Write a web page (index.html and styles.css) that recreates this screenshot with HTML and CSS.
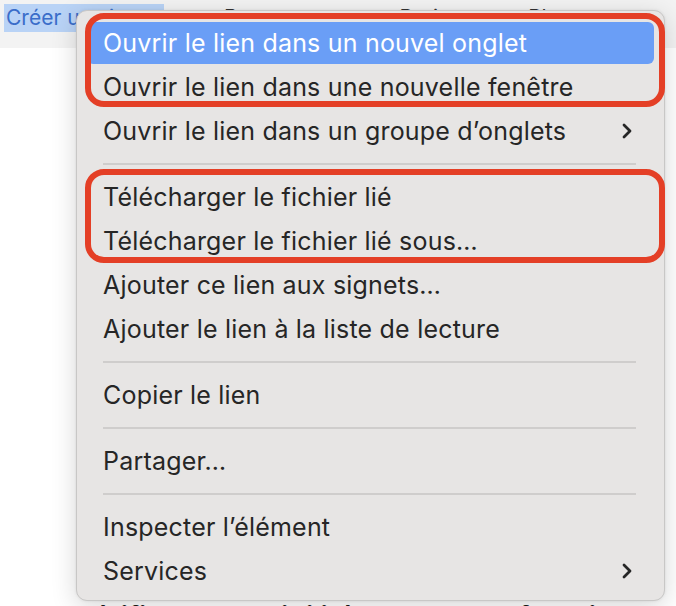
FILE: index.html
```html
<!DOCTYPE html>
<html lang="fr">
<head>
<meta charset="utf-8">
<link rel="stylesheet" href="styles.css">
</head>
<body>
<header class="topbar">
  <nav class="nav">
    <span class="nav-sel">Créer un site</span>
    <span class="nav-item">Ressources</span>
    <span class="nav-item">Projets</span>
    <span class="nav-item">Plus</span>
  </nav>
</header>
<main class="page">
  <p class="page-text">Vérifiez la possibilité d'erreur en fonction</p>
</main>

<div class="menu">
  <div class="row hl"><span>Ouvrir le lien dans un nouvel onglet</span></div>
  <div class="row"><span>Ouvrir le lien dans une nouvelle fenêtre</span></div>
  <div class="row"><span>Ouvrir le lien dans un groupe d’onglets</span>
    <svg class="chev" width="12" height="18" viewBox="0 0 12 18"><path d="M3 3 L9 9 L3 15" fill="none" stroke="#262626" stroke-width="2.8" stroke-linecap="round" stroke-linejoin="round"/></svg>
  </div>
  <div class="sep"></div>
  <div class="row"><span>Télécharger le fichier lié</span></div>
  <div class="row"><span>Télécharger le fichier lié sous…</span></div>
  <div class="row"><span>Ajouter ce lien aux signets…</span></div>
  <div class="row"><span>Ajouter le lien à la liste de lecture</span></div>
  <div class="sep"></div>
  <div class="row"><span>Copier le lien</span></div>
  <div class="sep"></div>
  <div class="row"><span>Partager…</span></div>
  <div class="sep"></div>
  <div class="row"><span>Inspecter l’élément</span></div>
  <div class="row"><span>Services</span>
    <svg class="chev" width="12" height="18" viewBox="0 0 12 18"><path d="M3 3 L9 9 L3 15" fill="none" stroke="#262626" stroke-width="2.8" stroke-linecap="round" stroke-linejoin="round"/></svg>
  </div>
</div>

<div class="mark mark-1"></div>
<div class="mark mark-2"></div>
</body>
</html>
```

FILE: styles.css
```css
* { box-sizing: border-box; }
html, body { margin: 0; padding: 0; }
body {
  width: 676px;
  height: 606px;
  overflow: hidden;
  background: #ffffff;
  font-family: Inter, "Noto Sans", sans-serif;
  position: relative;
}
.topbar {
  height: 48px;
  background: #f3f3f3;
  padding: 4px 0 0 4px;
}
.nav {
  display: flex;
  gap: 60px;
  align-items: flex-start;
}
.nav-sel {
  background: #b9d3f6;
  color: #3a6dc9;
  font-size: 21px;
  line-height: 28px;
  padding: 0 2px;
  width: 160px;
  white-space: nowrap;
  overflow: hidden;
}
.nav-item {
  color: #333;
  font-size: 21px;
  line-height: 28px;
}
.page {
  padding: 600px 0 0 74px;
  margin: 0;
  position: absolute;
  top: 0;
  left: 0;
}
.page-text {
  margin: 0;
  font-size: 28px;
  line-height: 34px;
  font-weight: 600;
  color: #1a1a1a;
  white-space: nowrap;
}
.menu {
  position: absolute;
  left: 76px;
  top: 10px;
  width: 589px;
  height: 591px;
  background: #e7e5e4;
  border: 1px solid #c8c7c6;
  border-radius: 11px;
  box-shadow: 0 6px 26px rgba(0,0,0,0.16), 0 0 3px rgba(0,0,0,0.08);
  padding: 10px 10px 0 10px;
  display: flex;
  flex-direction: column;
}
.row {
  height: 44px;
  display: flex;
  align-items: center;
  justify-content: space-between;
  padding: 0 21px 0 16px;
  font-size: 25px;
  letter-spacing: 0.2px;
  color: #262626;
  border-radius: 6px;
  white-space: nowrap;
}
.row.hl {
  background: #6a9ef6;
  color: #ffffff;
  height: 42px;
  margin: 1px 0;
}
.chev { display: block; }
.sep {
  height: 22px;
  display: flex;
  align-items: center;
  padding: 0 18px 0 16px;
}
.sep::before {
  content: "";
  display: block;
  width: 100%;
  height: 2px;
  background: #cfcdcc;
}
.mark {
  position: absolute;
  left: 85px;
  width: 580px;
  border: 6px solid #e43f26;
  border-radius: 19px;
}
.mark-1 { top: 13px; height: 94px; }
.mark-2 { top: 169px; height: 94px; }
```
